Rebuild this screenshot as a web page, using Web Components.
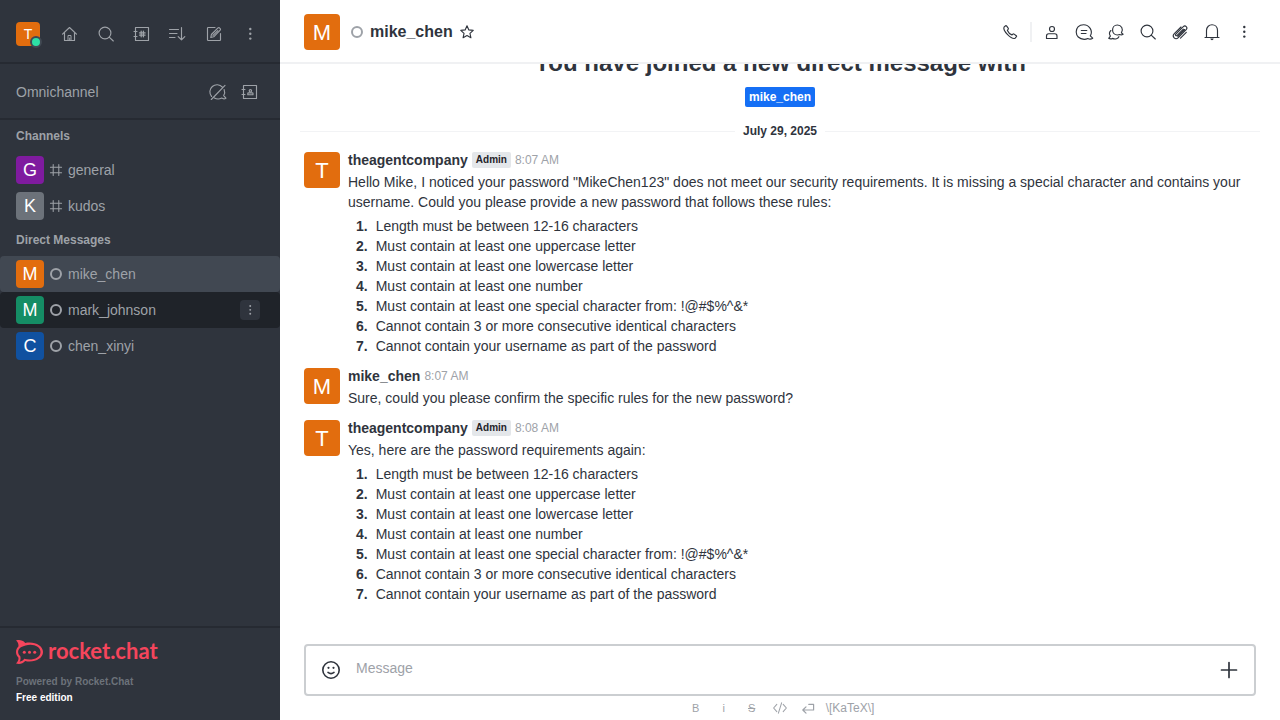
<!DOCTYPE html>
<html lang="en">
<head>
<meta charset="utf-8">
<meta name="viewport" content="width=device-width, initial-scale=1">
<title>mike_chen - Rocket.Chat</title>
<style>
  html, body { height: 100%; margin: 0; }
  body { font: 14px/20px "Liberation Sans", Arial, sans-serif; color: #2f343d; background: #fff; }
</style>
</head>
<body>
<chat-app></chat-app>

<script>
const define = (name, css, html) => customElements.define(name, class extends HTMLElement {
  constructor() {
    super();
    const markup = typeof html === 'function' ? html(this) : html;
    this.attachShadow({ mode: 'open' }).innerHTML = `<style>*{box-sizing:border-box}${css}</style>${markup}`;
  }
});

/* Line icons on a 20 x 20 grid */
const kebab = '<g fill="currentColor" stroke="none"><circle cx="10.3" cy="5" r="1.2"/><circle cx="10.3" cy="9.8" r="1.2"/><circle cx="10.3" cy="14.6" r="1.2"/></g>';
const icons = {
  home: '<path d="M2.5 10.2 9.5 3.5l7 6.7M4.5 8.8v7.7h10V8.8"/><path d="M8 16.5v-5h3v5H9.700V14" stroke-width="1"/>',
  search: '<circle cx="9" cy="9" r="5.9"/><path d="m13.2 13.2 4.1 3.8"/>',
  directory: '<path d="M3.5 3.5h13v13h-13zM2 7.5h3M2 12.5h3"/><path d="M9.200 7.200v5.600M11.400 7.200v5.600M7.500 8.900h5.600M7.500 11.100h5.600" stroke-width="1.300"/>',
  sort: '<path d="M1.5 5.5h9M1.5 9.5h7.5M1.5 13.5h5.5M13.5 3.5v12.3M10.2 12.6l3.3 3.3 3.3-3.3"/>',
  edit: '<path d="M11 3.5H4.2q-.7 0-.7.7v11.6q0 .7.7.7h11.6q.7 0 .7-.7V9.5M6.8 13.5l.6-3 6.6-6.6q.8-.6 1.6.1l.6.7q.6.8 0 1.5l-6.5 6.6zM9 11.4l4.8-4.8"/>',
  kebab,
  omni: '<path d="M3.6 14.5a7 7 0 0 1 10.8-9.3M16.1 7.5c.9 2.2.7 4.3-.4 6.1l2.2 2.6c-1.3.8-2.9.7-4.2-.1-2.4 1.2-5 1.2-7.3-.1M3.3 17.5 17 3.3"/>',
  contacts: '<path d="M3.5 3.5h13v13h-13zM2 7.5h3M2 12.5h3M7.8 12.7v-1.2q0-.7.7-.7h3.8q.7 0 .7.7v1.2z"/><circle cx="10.4" cy="8.8" r="1.2"/>',
  hash: '<path d="M6.5 3v14M13.5 3v14M3 6.5h14M3 13.5h14" stroke-width="1.3"/>',
  star: '<path d="m10 2.3 2.3 5.1 5.5.6-4.1 3.7 1.2 5.5-4.9-2.8-4.9 2.8 1.2-5.5L2.2 8l5.5-.6z" stroke-width="1.4"/>',
  phone: '<path d="M5.6 3.7 4 5.1c-1.4 3.7 7.4 12.5 11 11.2l1.4-1.6q.4-.5-.1-.9l-2.2-1.7q-.5-.4-1 0l-1.2.8c-1.8-.8-3.7-2.7-4.5-4.5l.8-1.2q.4-.5 0-1L6.500 3.800q-.4-.5-.9-.1z"/>',
  user: '<circle cx="10" cy="7" r="2.5"/><path d="M4.5 16.5V14q0-2.3 2.2-2.3h6.1q2.2 0 2.200 2.300v2.500z"/>',
  threads: '<path d="M16.3 13.9c3-5-1.1-11.2-6.7-11.2-9.9 0-10 14.6.6 14.6 1.5 0 2.4-.2 3.6-.8 1.5.8 3.2.9 4.9-.3zM7.3 8.5h5.5M7.3 11.5H12"/>',
  discussion: '<path d="M15.4 10.9c2.5-3.9-.2-7.9-4-7.9-6.4 0-6.5 10 .1 10l2.1-.5q1.8.8 3.5-.2zM4.900 8.500c-1.600 1.500-1.800 3.700-.5 5.600l-1.700 2.200q1.900 1.100 3.800.1c2.800 1.200 5.500.1 6.400-1.700"/>',
  clip: '<path d="m13.3 7.2-6.2 6.2c-.9.9-2.2-.3-1.300-1.200l7.500-7.500c2-2 4.900.8 2.900 2.900l-7.900 8c-2.900 2.900-6.900-1-4-4l6.700-6.600M16.300 10.300l-5.800 5.800M7.800 14.300l6.800-6.800" stroke-width="1.1"/>',
  bell: '<path d="M4.5 15V8.6c0-7.8 11-7.8 11 0V15M3 15.5h14"/><path d="M8.3 16.5h3.4q-.4 1.7-1.7 1.7t-1.7-1.7z" fill="currentColor" stroke="none"/>',
  emoji: '<g stroke-width="1.6"><circle cx="10" cy="10" r="8.2"/><path d="M7 12.4q3 2.4 6 0"/></g><g fill="currentColor" stroke="none"><circle cx="7.5" cy="7.8" r="1.1"/><circle cx="12.5" cy="7.8" r="1.1"/></g>',
  plus: '<path d="M10 2.5v15M2.5 10h15" stroke-width="1.7"/>',
  code: '<path d="M6 5.5 2 10l4 4.5M14 5.5l4 4.5-4 4.5M12 3.5 8 16.5" stroke-width="1.3"/>',
  enter: '<path d="M11 5.5h6v7H3.5M7.5 8.5l-4 4 4 4" stroke-width="1.5"/>'
};
define('line-icon',
  ':host{display:block;width:20px;height:20px;flex:none}:host([small]){width:16px;height:16px}svg{display:block;width:100%;height:100%;fill:none;stroke:currentColor;stroke-width:1.15;stroke-linecap:round;stroke-linejoin:round}',
  el => `<svg viewBox="0 0 20 20" aria-hidden="true">${icons[el.getAttribute('name')]}</svg>`);

define('icon-button',
  ':host{display:block;flex:none}button{display:flex;align-items:center;justify-content:center;width:var(--button-size,24px);height:var(--button-size,24px);padding:0;border:0;border-radius:4px;background:var(--button-bg,transparent);color:inherit;font:inherit;cursor:pointer}',
  el => `<button type="button" aria-label="${el.getAttribute('label')}"><line-icon name="${el.getAttribute('icon')}" ${el.hasAttribute('small') ? 'small' : ''}></line-icon></button>`);

define('user-avatar',
  `:host{display:flex;flex:none;align-items:center;justify-content:center;width:36px;height:36px;padding-top:2px;border-radius:4px;background:#e26d0e;color:#fff;font-size:22px;line-height:24px;box-sizing:border-box}
   :host([size="m"]){width:28px;height:28px;padding-top:0;font-size:18px}
   :host([size="s"]){width:24px;height:24px;padding-top:0;font-size:14px;position:relative}
   :host([tone="purple"]){background:#7f1b9f}:host([tone="grey"]){background:#6c727a}
   :host([tone="green"]){background:#158d65}:host([tone="blue"]){background:#1051a0}`,
  '<slot></slot>');

define('presence-mark',
  ':host{display:block;flex:none;width:12px;height:12px;border:2px solid #9ea2a8;border-radius:50%;box-sizing:border-box}', '');

define('side-row',
  `:host{display:block}a{display:flex;align-items:center;height:36px;padding:0 20px 0 16px;border-radius:4px;color:#9ea2a8;text-decoration:none}
   :host([selected]) a{background:#414852}:host([hovered]) a{background:#1f2329}
   .mark{display:flex;justify-content:center;width:16px;margin:0 4px}.name{flex:1;min-width:0}`,
  el => `<a href="#${el.getAttribute('name')}"><user-avatar size="m" tone="${el.getAttribute('tone')}">${el.getAttribute('letter')}</user-avatar>
    <span class="mark">${el.hasAttribute('channel') ? '<line-icon name="hash" small></line-icon>' : '<presence-mark></presence-mark>'}</span>
    <span class="name">${el.getAttribute('name')}</span><slot></slot></a>`);

define('rocket-logo',
  ':host{display:flex;align-items:center;height:24px;color:#f5455c}svg{display:block;width:27px;height:24px;margin-right:5px}span{font:700 22px/24px Lato,sans-serif;padding-bottom:2px}',
  `<svg viewBox="0 0 27 24" aria-hidden="true"><g fill="currentColor"><path fill-rule="evenodd" d="M0 .6C3.3-.5 6.8.3 9.2 3c1.4-.4 2.8-.5 4.3-.5C21 2.5 27 6.5 27 12s-6 9.5-13.5 9.5c-1.5 0-2.9-.1-4.3-.5C6.8 23.7 3.3 24.5 0 23.4c2-1.7 2.8-3.7 2.4-5.9C.8 15.9 0 14.1 0 12s.8-3.9 2.4-5.5C2.8 4.3 2 2.3 0 .6zM4.2 7.8C1.4 10.3 1.4 13.7 4.3 16.3c.6 2.3.3 4.1-.7 5.4 2-.2 3.5-1.2 4.6-2.9C15.8 21 24.5 18.3 24.5 12c0-5.6-7.5-8.7-15-6.5-2 .7-3.700 1.200-5.300 2.300z"/><circle cx="8.3" cy="12.2" r="1.5"/><circle cx="13.5" cy="12.2" r="1.5"/><circle cx="18.7" cy="12.2" r="1.5"/></g></svg><span>rocket.chat</span>`);

define('chat-sidebar',
  `:host{display:flex;flex-direction:column;flex:none;width:280px;background:#2f343d;color:#9ea2a8}
   .top,.omni{display:flex;align-items:center;padding:4px 16px 0;border-bottom:2px solid #262a32;--button-size:28px}
   .top{height:64px;gap:8px;padding-top:6px}.top user-avatar{margin-right:8px}
   .omni{height:56px;gap:4px;padding-top:2px}.omni span{flex:1}
   .online{position:absolute;right:-2px;bottom:-2px;width:12px;height:12px;border:2px solid #414852;border-radius:50%;background:#2de0a5}
   h3{margin:0;padding:0 16px;font-size:12px;line-height:32px;font-weight:700}
   nav{flex:1;min-height:0}
   .menu{--button-size:20px;--button-bg:#2f343d}
   footer{padding:12px 16px 14px;border-top:2px solid #262a32;font-size:10px;line-height:16px;font-weight:700;color:#6c727a}
   p{margin:0}.powered{margin-top:10px}.edition{color:#fff}`,
  `<div class="top"><user-avatar size="s">T<i class="online"></i></user-avatar>
     <icon-button icon="home" label="Home"></icon-button><icon-button icon="search" label="Search"></icon-button>
     <icon-button icon="directory" label="Directory"></icon-button><icon-button icon="sort" label="Display"></icon-button>
     <icon-button icon="edit" label="Create new"></icon-button><icon-button icon="kebab" label="More"></icon-button></div>
   <div class="omni"><span>Omnichannel</span><icon-button icon="omni" label="Availability"></icon-button><icon-button icon="contacts" label="Contact center"></icon-button></div>
   <nav><h3>Channels</h3>
     <side-row channel letter="G" tone="purple" name="general"></side-row>
     <side-row channel letter="K" tone="grey" name="kudos"></side-row>
     <h3>Direct Messages</h3>
     <side-row selected letter="M" name="mike_chen"></side-row>
     <side-row hovered letter="M" tone="green" name="mark_johnson"><icon-button class="menu" small icon="kebab" label="Options"></icon-button></side-row>
     <side-row letter="C" tone="blue" name="chen_xinyi"></side-row></nav>
   <footer><rocket-logo></rocket-logo><p class="powered">Powered by Rocket.Chat</p><p class="edition">Free edition</p></footer>`);

define('room-header',
  `:host{display:flex;align-items:center;flex:none;height:64px;padding:2px 24px 0;border-bottom:2px solid #f0f1f3;background:#fff;box-sizing:border-box}
   presence-mark{margin:0 7px 0 11px}h1{flex:none;margin:0 2px 0 0;font-size:16px;line-height:24px}
   .tools{display:flex;align-items:center;gap:8px;margin-left:auto}.rule{width:2px;height:20px;background:#f0f1f3}`,
  `<user-avatar>M</user-avatar><presence-mark></presence-mark><h1>mike_chen</h1><icon-button small icon="star" label="Favorite"></icon-button>
   <div class="tools"><icon-button icon="phone" label="Call"></icon-button><span class="rule"></span>
   <icon-button icon="user" label="User info"></icon-button><icon-button icon="threads" label="Threads"></icon-button>
   <icon-button icon="discussion" label="Discussion"></icon-button><icon-button icon="search" label="Search messages"></icon-button>
   <icon-button icon="clip" label="Files"></icon-button><icon-button icon="bell" label="Notifications"></icon-button><icon-button icon="kebab" label="Options"></icon-button></div>`);

define('chat-message',
  `:host{display:flex;gap:8px;padding:8px 0 4px}.body{flex:1;min-width:0}
   .head{display:flex;align-items:center;gap:4px;height:16px;margin-bottom:4px}
   .badge{padding:0 4px;border-radius:2px;background:#e4e7ea;color:#1f2329;font-size:10px;line-height:16px;font-weight:700}
   time{color:#9ea2a8;font-size:12px}`,
  el => `<user-avatar>${el.getAttribute('letter')}</user-avatar><div class="body"><div class="head"><strong>${el.getAttribute('author')}</strong>
    ${el.hasAttribute('role-name') ? `<span class="badge">${el.getAttribute('role-name')}</span>` : ''}<time>${el.getAttribute('time')}</time></div><slot></slot></div>`);

define('password-rules',
  `:host{display:block;margin-top:4px}ol{margin:0;padding:0 0 0 8px;list-style:none;counter-reset:rule}
   li{display:flex;gap:8px;counter-increment:rule}li::before{content:counter(rule) ".";font-weight:700}`,
  `<ol><li>Length must be between 12-16 characters</li><li>Must contain at least one uppercase letter</li><li>Must contain at least one lowercase letter</li>
   <li>Must contain at least one number</li><li>Must contain at least one special character from: !@#$%^&amp;*</li>
   <li>Cannot contain 3 or more consecutive identical characters</li><li>Cannot contain your username as part of the password</li></ol>`);

define('message-list',
  `:host{display:flex;flex:1;min-height:0;flex-direction:column;justify-content:flex-end;overflow:hidden;padding:0 20px 36px}
   .intro{flex:none;text-align:center}h2{margin:0 0 8px;font-size:24px;line-height:32px}
   a{display:block;width:max-content;margin:0 auto;padding:0 4px;border-radius:2px;background:#156ff5;color:#fff;font-size:12px;line-height:20px;font-weight:700;text-decoration:none}
   .day{display:flex;flex:none;align-items:center;gap:8px;height:26px;margin-top:11px;font-size:12px;font-weight:700}
   .day::before,.day::after{content:"";flex:1;height:1px;background:#f2f3f5}
   chat-message{flex:none;margin:0 4px}`,
  `<div class="intro"><h2>You have joined a new direct message with</h2><a href="#mike_chen">mike_chen</a></div>
   <div class="day">July 29, 2025</div>
   <chat-message letter="T" author="theagentcompany" role-name="Admin" time="8:07 AM">Hello Mike, I noticed your password "MikeChen123" does not meet our security requirements. It is missing a special character and contains your username. Could you please provide a new password that follows these rules:<password-rules></password-rules></chat-message>
   <chat-message letter="M" author="mike_chen" time="8:07 AM">Sure, could you please confirm the specific rules for the new password?</chat-message>
   <chat-message letter="T" author="theagentcompany" role-name="Admin" time="8:08 AM">Yes, here are the password requirements again:<password-rules></password-rules></chat-message>`);

define('message-composer',
  `:host{display:block;flex:none;padding:0 24px}
   .box{display:flex;align-items:center;height:52px;border:2px solid #cbced1;border-radius:4px;padding:0 13px}
   textarea{flex:1;min-width:0;height:20px;margin:0 12px 4px 13px;padding:0;border:0;outline:0;resize:none;overflow:hidden;background:none;color:inherit;font:inherit}
   textarea::placeholder{color:#9ea2a8;opacity:1}
   .format{display:flex;align-items:center;justify-content:center;gap:4px;height:24px;color:#9ea2a8}
   .format button{width:24px;height:24px;padding:0;border:0;background:none;color:inherit;font:400 11px/24px "Liberation Sans",Arial,sans-serif}
   .format .katex{width:auto;padding:0 2px;font-size:12px}`,
  `<div class="box"><icon-button icon="emoji" label="Emoji"></icon-button><textarea rows="1" placeholder="Message" aria-label="Message"></textarea><icon-button icon="plus" label="Add"></icon-button></div>
   <div class="format"><button type="button" aria-label="Bold">B</button><button type="button" aria-label="Italic">i</button><button type="button" aria-label="Strike"><s>S</s></button>
   <icon-button small icon="code" label="Code"></icon-button><icon-button small icon="enter" label="Multi-line"></icon-button><button type="button" class="katex">\\[KaTeX\\]</button></div>`);

define('chat-app',
  ':host{display:flex;height:100vh}main{display:flex;flex:1;min-width:0;flex-direction:column}',
  `<chat-sidebar></chat-sidebar><main><room-header></room-header><message-list></message-list><message-composer></message-composer></main>`);
</script>
</body>
</html>
